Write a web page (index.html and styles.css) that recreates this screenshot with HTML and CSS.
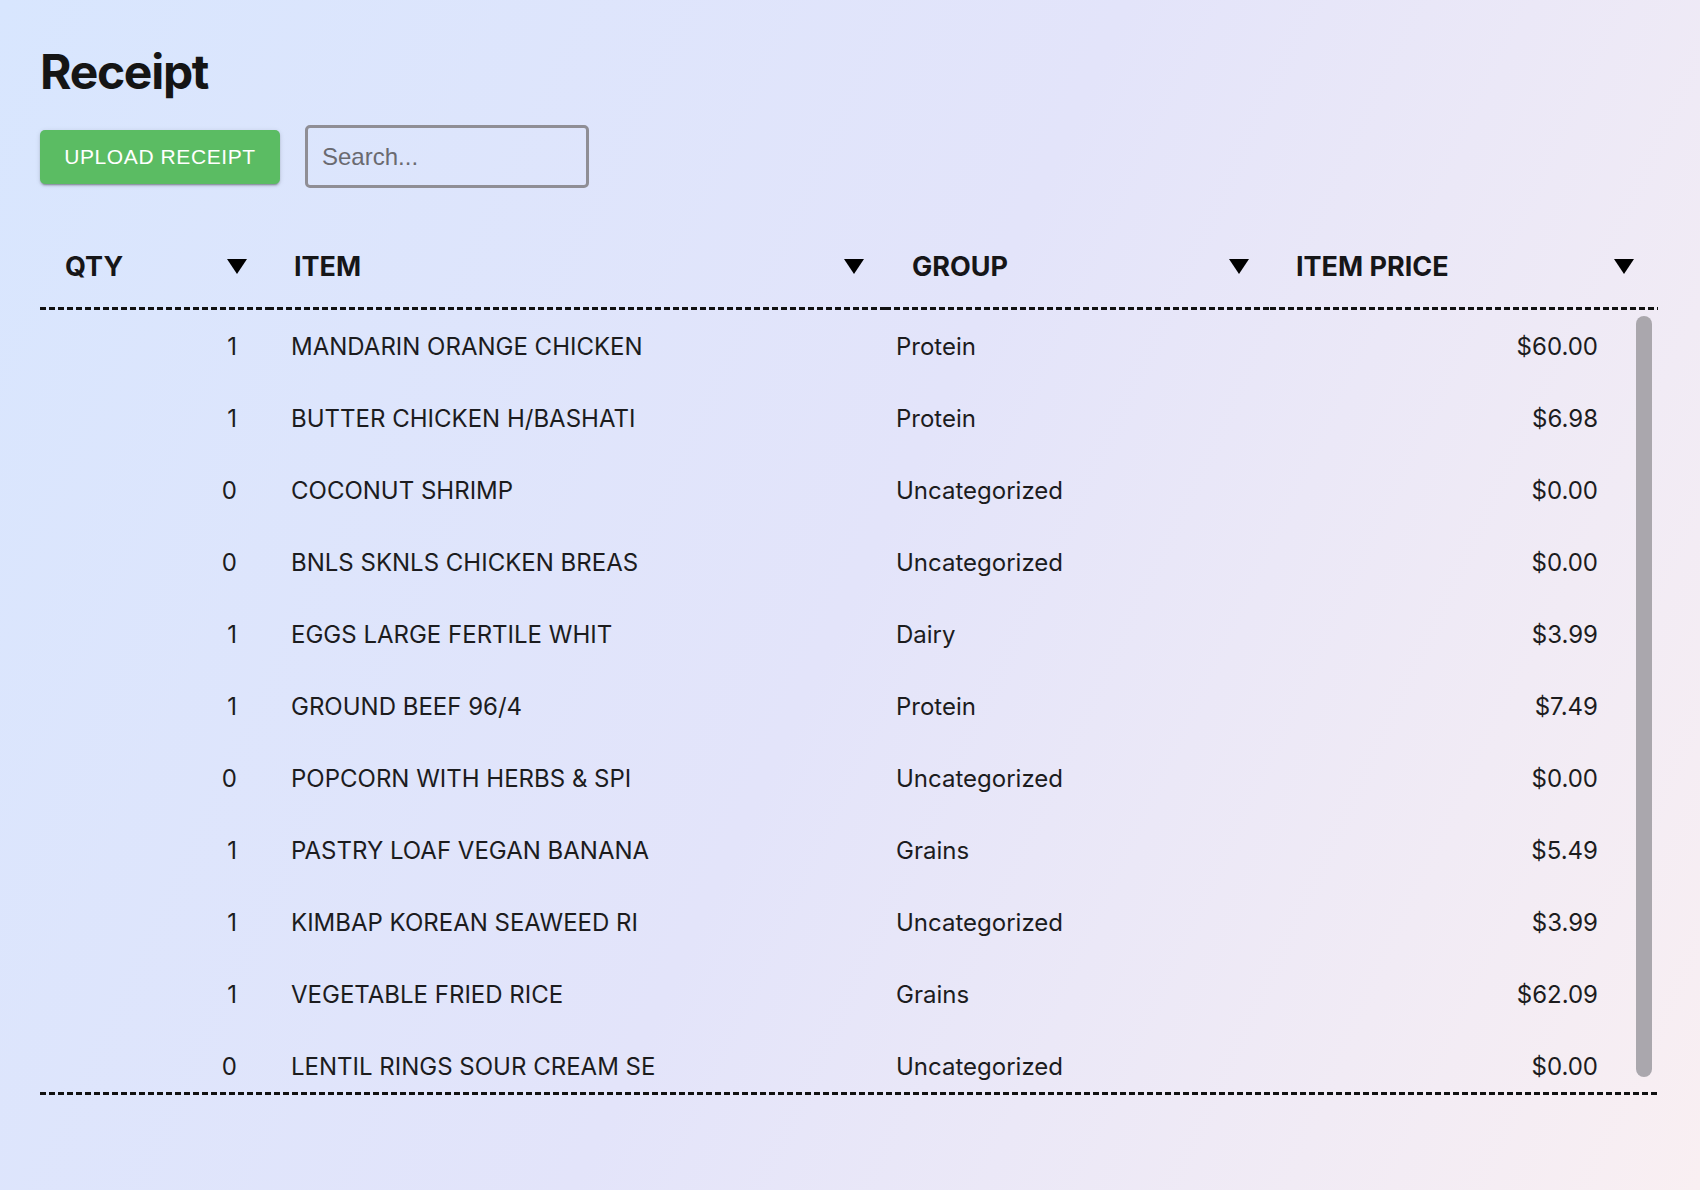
FILE: index.html
```html
<!DOCTYPE html>
<html lang="en">
<head>
<meta charset="utf-8">
<title>Receipt</title>
<link rel="stylesheet" href="styles.css">
</head>
<body>
<main class="page">
  <h1 class="title">Receipt</h1>
  <div class="toolbar">
    <button class="upload-btn" type="button">UPLOAD RECEIPT</button>
    <input class="search" type="text" placeholder="Search...">
  </div>

  <div class="receipt-table">
    <div class="thead">
      <div class="th"><span>QTY</span><svg class="sort" viewBox="0 0 20 15" width="20" height="15"><polygon points="0,0 20,0 10,15"/></svg></div>
      <div class="th"><span>ITEM</span><svg class="sort" viewBox="0 0 20 15" width="20" height="15"><polygon points="0,0 20,0 10,15"/></svg></div>
      <div class="th th-group"><span>GROUP</span><svg class="sort" viewBox="0 0 20 15" width="20" height="15"><polygon points="0,0 20,0 10,15"/></svg></div>
      <div class="th th-last"><span>ITEM PRICE</span><svg class="sort" viewBox="0 0 20 15" width="20" height="15"><polygon points="0,0 20,0 10,15"/></svg></div>
    </div>

    <div class="tbody">
      <div class="rows">
        <div class="row"><span class="qty">1</span><span class="item">MANDARIN ORANGE CHICKEN</span><span class="group">Protein</span><span class="price">$60.00</span></div>
        <div class="row"><span class="qty">1</span><span class="item">BUTTER CHICKEN H/BASHATI</span><span class="group">Protein</span><span class="price">$6.98</span></div>
        <div class="row"><span class="qty">0</span><span class="item">COCONUT SHRIMP</span><span class="group">Uncategorized</span><span class="price">$0.00</span></div>
        <div class="row"><span class="qty">0</span><span class="item">BNLS SKNLS CHICKEN BREAS</span><span class="group">Uncategorized</span><span class="price">$0.00</span></div>
        <div class="row"><span class="qty">1</span><span class="item">EGGS LARGE FERTILE WHIT</span><span class="group">Dairy</span><span class="price">$3.99</span></div>
        <div class="row"><span class="qty">1</span><span class="item">GROUND BEEF 96/4</span><span class="group">Protein</span><span class="price">$7.49</span></div>
        <div class="row"><span class="qty">0</span><span class="item">POPCORN WITH HERBS &amp; SPI</span><span class="group">Uncategorized</span><span class="price">$0.00</span></div>
        <div class="row"><span class="qty">1</span><span class="item">PASTRY LOAF VEGAN BANANA</span><span class="group">Grains</span><span class="price">$5.49</span></div>
        <div class="row"><span class="qty">1</span><span class="item">KIMBAP KOREAN SEAWEED RI</span><span class="group">Uncategorized</span><span class="price">$3.99</span></div>
        <div class="row"><span class="qty">1</span><span class="item">VEGETABLE FRIED RICE</span><span class="group">Grains</span><span class="price">$62.09</span></div>
        <div class="row"><span class="qty">0</span><span class="item">LENTIL RINGS SOUR CREAM SE</span><span class="group">Uncategorized</span><span class="price">$0.00</span></div>
      </div>
      <div class="scrollbar" aria-hidden="true"><div class="thumb"></div></div>
    </div>
    <div class="tfoot-line"></div>
  </div>
</main>
</body>
</html>
```

FILE: styles.css
```css
html, body {
  margin: 0;
  padding: 0;
  height: 100%;
}

body {
  font-family: "Inter", "Noto Sans", sans-serif;
  color: #1c1c1e;
  background: linear-gradient(115deg, #d8e6fe 0%, #e3e4fa 50%, #f9eff2 100%);
  min-height: 100vh;
  overflow: hidden;
}

.page {
  padding: 0 42px 0 40px;
}

.title {
  margin: 43px 0 0 0;
  font-size: 48px;
  line-height: 58px;
  font-weight: 700;
  letter-spacing: -1.3px;
  color: #151515;
}

.toolbar {
  margin-top: 24px;
  display: flex;
  align-items: center;
  gap: 25px;
}

.upload-btn {
  font-family: "Liberation Sans", Arial, sans-serif;
  font-size: 21px;
  letter-spacing: 0.6px;
  color: #ffffff;
  background: #5bbc63;
  border: none;
  border-radius: 5px;
  width: 240px;
  height: 54px;
  padding: 0;
  box-shadow: 0 3px 1px -2px rgba(0,0,0,0.2), 0 2px 2px 0 rgba(0,0,0,0.14), 0 1px 5px 0 rgba(0,0,0,0.12);
  cursor: pointer;
}

.search {
  box-sizing: border-box;
  width: 284px;
  height: 63px;
  border: 3px solid #8f8e95;
  border-radius: 5px;
  background: transparent;
  padding: 0 14px;
  font-family: "Liberation Sans", Arial, sans-serif;
  font-size: 24px;
  color: #333;
  outline: none;
}

.search::placeholder {
  color: #6a6a70;
}

.receipt-table {
  margin-top: 38px;
}

.thead {
  display: grid;
  grid-template-columns: 228px 617px 385px 1fr;
}

.th {
  height: 84px;
  display: flex;
  align-items: center;
  justify-content: space-between;
  padding: 0 21px 3px 26px;
  box-sizing: border-box;
  font-size: 27px;
  font-weight: 700;
  color: #161618;
  background-image: repeating-linear-gradient(90deg, #111 0 6px, transparent 6px 9px);
  background-size: 100% 3px;
  background-position: left bottom;
  background-repeat: no-repeat;
}

.th:first-child {
  padding-left: 25px;
}

.th-group {
  padding-left: 27px;
}

.th-last {
  padding-right: 24px;
}

.sort {
  display: block;
  fill: #000;
}

.tbody {
  height: 782px;
  display: flex;
}

.rows {
  flex: 1;
  overflow: hidden;
}

.scrollbar {
  width: 24px;
  box-sizing: border-box;
  padding: 6px 6px 15px 2px;
}

.thumb {
  height: 100%;
  border-radius: 8px;
  background: #aaa7ad;
}

.row {
  display: grid;
  grid-template-columns: 227px 605px 400px 1fr;
  height: 72px;
  align-items: center;
  font-size: 24px;
  color: #1c1c1e;
}

.qty {
  text-align: right;
  padding-right: 30px;
}

.item {
  padding-left: 24px;
}

.group {
  padding-left: 24px;
}

.price {
  text-align: right;
  padding-right: 36px;
}

.tfoot-line {
  height: 3px;
  background-image: repeating-linear-gradient(90deg, #111 0 6px, transparent 6px 9px);
}
```
